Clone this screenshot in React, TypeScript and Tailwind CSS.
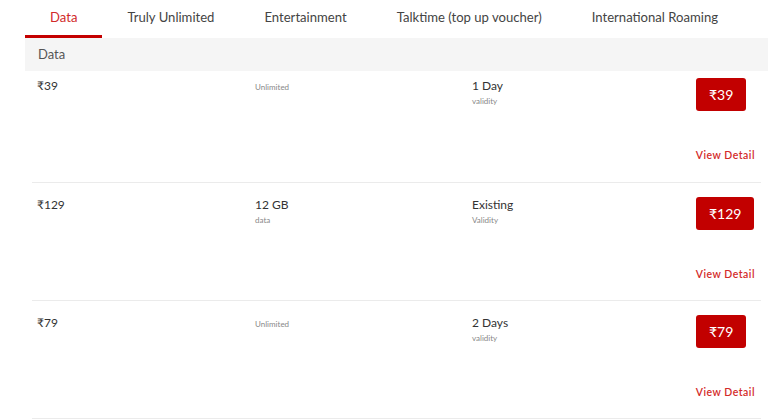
import React from "react";

const tabs = ["Data", "Truly Unlimited", "Entertainment", "Talktime (top up voucher)", "International Roaming"];

type Plan = { price: string; c2?: string; c2sub?: string; c3: string; c3sub: string };

const plans: Plan[] = [
  { price: "₹39", c2sub: "Unlimited", c3: "1 Day", c3sub: "validity" },
  { price: "₹129", c2: "12 GB", c2sub: "data", c3: "Existing", c3sub: "Validity" },
  { price: "₹79", c2sub: "Unlimited", c3: "2 Days", c3sub: "validity" },
];

export default function App() {
  return (
    <div className="w-[768px] h-[420px] overflow-hidden bg-white" style={{ fontFamily: "Lato, 'Open Sans', sans-serif" }}>
      <div className="ml-[25px]">
        <div className="flex h-[38px]">
          {tabs.map((t, i) => (
            <div
              key={t}
              className={`px-[25px] flex items-center text-[13.1px] border-b-[3px] ${
                i === 0 ? "border-[#c40000] text-[#d12a2a]" : "border-transparent text-[#444]"
              }`}
            >
              {t}
            </div>
          ))}
        </div>
        <div className="h-[33px] bg-[#f5f5f5] flex items-center pl-[13px] text-[13px] text-[#555]">Data</div>
        <div className="mx-[7px]">
          {plans.map((p, i) => (
            <div
              key={i}
              className={`flex flex-col border-b border-[#ebebeb] ${i === 0 ? "pt-[7px] h-[112px]" : "pt-[14px] h-[118px]"}`}
            >
              <div className="flex items-start pl-[5px] h-[33px]">
                <div className="w-[218px] text-[12px] leading-[16px] text-[#333]">{p.price}</div>
                <div className="w-[217px] flex flex-col">
                  {p.c2 ? (
                    <>
                      <div className="text-[12px] leading-[16px] text-[#333]">{p.c2}</div>
                      <div className="text-[8px] leading-[11px] mt-[2px] text-[#888]">{p.c2sub}</div>
                    </>
                  ) : (
                    <div className="text-[8px] leading-[11px] pt-[4px] text-[#888]">{p.c2sub}</div>
                  )}
                </div>
                <div className="w-[224px] flex flex-col">
                  <div className="text-[12px] leading-[16px] text-[#333]">{p.c3}</div>
                  <div className="text-[8px] leading-[11px] mt-[2px] text-[#888]">{p.c3sub}</div>
                </div>
                <div className="h-[33px] px-[13px] rounded-[3px] bg-[#c20000] text-white text-[14px] flex items-center">
                  {p.price}
                </div>
              </div>
              <div className="mt-[38px] h-[13px] flex justify-end items-center pr-[6px]">
                <span className="text-[10.5px] leading-[13px] font-semibold tracking-[0.5px] text-[#d32a2a]">View Detail</span>
              </div>
            </div>
          ))}
        </div>
      </div>
    </div>
  );
}
